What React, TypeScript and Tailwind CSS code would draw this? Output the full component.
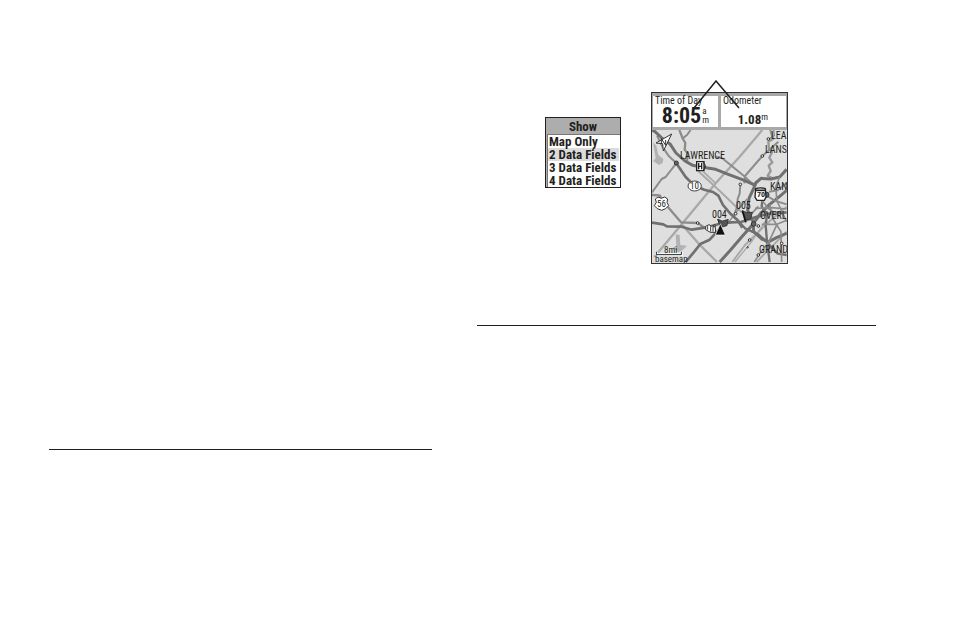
const MENU_ITEMS = ["Map Only", "2 Data Fields", "3 Data Fields", "4 Data Fields"];

type Road = { d: string; w: number; c: string };

const LIGHT = "#a9a9a9";
const MID = "#8c8c8c";
const DARK = "#707070";

const ROADS: Road[] = [
  // county lines
  { d: "M352 165 L284 245 L212 325 L110 448 L28 546", w: 7, c: LIGHT },
  { d: "M153 282 L218 342 L262 384 L290 412", w: 6, c: LIGHT },
  { d: "M212 325 L175 290", w: 5, c: LIGHT },
  { d: "M110 448 L160 505 L216 561", w: 7, c: LIGHT },
  { d: "M425 395 L372 440 L300 510 L262 561", w: 6, c: LIGHT },
  { d: "M425 470 L360 535 L335 561", w: 6, c: LIGHT },
  { d: "M360 440 L320 500 L270 561", w: 4, c: LIGHT },
  // rivers
  { d: "M376 165 L384 192 L370 200 L372 222 L381 232 L373 248 L382 262 L371 272 L377 288 L368 302 L386 312", w: 7, c: "#999" },
  { d: "M386 165 L388 182 L374 190", w: 4, c: MID },
  // minor roads
  { d: "M103 165 L113 190 L121 204 L119 224 L128 236 L126 262", w: 7, c: MID },
  { d: "M137 165 L126 180 L113 190", w: 6, c: MID },
  { d: "M36 182 L52 215 L72 244 L93 263", w: 6, c: MID },
  { d: "M93 266 L62 306 L50 312 L21 352", w: 6, c: MID },
  { d: "M212 245 L232 250 L298 304 L332 336", w: 6, c: MID },
  { d: "M400 200 L352 243 L300 303 L298 325", w: 6, c: MID },
  { d: "M286 328 L284 356 L278 372 L276 396 L266 424", w: 6, c: MID },
  { d: "M21 360 L44 361 L54 380 L72 400 L108 442 L158 444 L178 458", w: 7, c: MID },
  { d: "M306 372 L270 416 L248 446", w: 4, c: MID },
  // highways
  { d: "M21 165 L30 170 L54 192 L76 208 L93 234 L120 258 L143 271 L168 276 L212 283 L250 298 L292 314 L334 332", w: 9, c: DARK },
  { d: "M95 266 L122 306 L148 332 L178 344 L204 351 L220 362 L234 390 L258 418 L278 436 L292 458", w: 8, c: DARK },
  { d: "M21 443 L55 448 L66 454 L110 455 L140 464 L180 458 L222 447 L258 442 L288 441 L340 424 L372 416 L425 412", w: 8, c: DARK },
  { d: "M122 561 L148 530 L166 507 L194 494 L222 464", w: 8, c: DARK },
  { d: "M224 561 L256 526 L290 486 L320 452 L348 414 L374 388 L404 364 L425 346", w: 9, c: DARK },
  { d: "M425 283 L404 306 L378 312 L348 310 L332 324 L326 340 L312 370 L308 406 L324 440 L326 470 L350 492 L372 500 L396 487 L425 475", w: 9, c: DARK },
  { d: "M354 360 L350 394 L366 420 L362 450 L366 500 L374 561", w: 7, c: DARK },
  { d: "M278 436 L300 460 L340 478 L364 500 L398 536 L425 540", w: 7, c: DARK },
  // city streets
  { d: "M364 362 L392 378 L425 388", w: 6, c: MID },
  { d: "M372 350 L398 346 L425 324", w: 6, c: MID },
  { d: "M404 306 L392 336 L396 378 L425 440", w: 5, c: MID },
  { d: "M374 388 L384 432 L408 470 L410 561", w: 5, c: MID },
  { d: "M330 400 L380 398 L425 402", w: 5, c: MID },
  { d: "M350 448 L396 448 L425 436", w: 5, c: MID },
  { d: "M336 358 L372 402 L404 424", w: 5, c: MID },
  { d: "M396 448 L372 500 L344 536 L328 561", w: 5, c: MID },
  { d: "M340 394 L312 424 L300 444", w: 5, c: MID },
];

// x, y, radius
const TOWNS = [
  [94, 264, 6],
  [352, 243, 4],
  [370, 192, 4],
  [286, 328, 4],
  [158, 444, 4],
  [272, 416, 4],
  [314, 495, 4],
  [326, 447, 7],
  [340, 453, 4],
  [308, 517, 2],
  [340, 540, 4],
  [364, 359, 8],
  [410, 505, 4],
];

const LABELS = [
  { text: "LAWRENCE", at: "left-[28px] top-[20px]" },
  { text: "LEA", at: "left-[119px] top-0" },
  { text: "LANS", at: "left-[113px] top-[14px]" },
  { text: "KAN", at: "left-[118px] top-[51px]" },
  { text: "OVERL", at: "left-[108px] top-[80px]" },
  { text: "GRAND", at: "left-[107px] top-[114px]" },
  { text: "004", at: "left-[60px] top-[79px]" },
  { text: "005", at: "left-[84px] top-[70px]" },
];

export default function App() {
  return (
    <main className="grid min-h-screen grid-cols-[383fr_399fr] gap-x-[45px] bg-white pr-[78px] pl-[49px] font-['Liberation_Sans_Narrow','Roboto_Condensed','Liberation_Sans',sans-serif] text-[#231f20]">
      <section className="pt-[449px]">
        <hr className="border-t border-[#231f20]" />
      </section>

      <section className="pt-[92px]">
        <div className="flex items-start gap-[30px] pl-[68px]">
          <ShowMenu />
          <MapScreen />
        </div>
        <hr className="mt-[61px] border-t border-[#231f20]" />
      </section>
    </main>
  );
}

function ShowMenu() {
  return (
    <div className="mt-[25px] w-[76px] border border-[#231f20] bg-[#adadad]">
      <h2 className="h-4 text-center text-[13px] leading-[18px] font-bold">Show</h2>
      <div className="ml-px border-t border-l border-[#777] bg-white pr-px">
        {MENU_ITEMS.map((item, i) => (
          <button
            key={item}
            className={`block h-[13px] w-full pl-px text-left text-[13px] leading-[13px] font-bold whitespace-nowrap ${
              i === 1 ? "bg-[#dcdcdc]" : ""
            }`}
          >
            {item}
          </button>
        ))}
      </div>
    </div>
  );
}

function MapScreen() {
  return (
    <div className="relative w-[137px] border border-[#333] bg-[#a8a8a8]">
      <div className="flex h-[37px] gap-[3px] pt-[3px] pr-px pb-[3px] pl-px">
        <div className="w-[65px] bg-white pl-[2px]">
          <p className="text-[10px] leading-[10px] whitespace-nowrap">Time of Day</p>
          <div className="flex items-center justify-end gap-px pr-[9px]">
            <span className="text-[22px] leading-[20px] font-bold">8:05</span>
            <span className="flex flex-col text-[9px] leading-[9px]">
              <span>a</span>
              <span>m</span>
            </span>
          </div>
        </div>
        <div className="flex-1 bg-white pl-[2px]">
          <p className="text-[10px] leading-[10px] whitespace-nowrap">Odometer</p>
          <div className="flex items-start justify-end pt-[7px] pr-[18px]">
            <span className="text-[13px] leading-[14px] font-bold">1.08</span>
            <span className="text-[9px] leading-[9px]">m</span>
          </div>
        </div>
      </div>
      <TrailMap />
      <svg className="absolute top-[-13px] left-[41px]" width="48" height="29" viewBox="0 0 48 29" fill="none">
        <path d="M1 28 L23 1 L46 28" stroke="#231f20" strokeWidth="1.5" />
      </svg>
    </div>
  );
}

function TrailMap() {
  return (
    <div className="relative h-[133px] overflow-hidden bg-[#dfdfdf]">
      <svg className="block h-full w-full" viewBox="21 165 405 399" fill="none">
        {/* lakes */}
        <path d="M24 202 L34 212 L40 240 L55 252 L53 264 L42 270 L24 258 L32 250Z" fill="#b2b2b2" />
        <path d="M92 478 L104 480 L106 510 L126 512 L114 524 L100 532 L84 518 L94 512Z" fill="#b2b2b2" />
        {ROADS.map((r) => (
          <path key={r.d} d={r.d} stroke={r.c} strokeWidth={r.w} strokeLinejoin="round" />
        ))}
        {TOWNS.map(([x, y, r]) => (
          <circle key={`${x}-${y}`} cx={x} cy={y} r={r} fill={r > 5 ? "#666" : "#eee"} stroke="#333" strokeWidth="3" />
        ))}

        {/* north arrow */}
        <path d="M80 177 L55 228 L53 206 L33 204Z" fill="#fff" stroke="#333" strokeWidth="3" />
        <path d="M49 207 V191 L62 211 V195" stroke="#333" strokeWidth="3" />

        {/* highway shields */}
        <path d="M155 260 H177 V287 H155Z" fill="#fff" stroke="#222" strokeWidth="4" />
        <path d="M161 264 V283 M170 264 V283 M161 274 H170" stroke="#222" strokeWidth="4" />
        <path d="M174 262 Q188 273 174 286" stroke="#222" strokeWidth="3" />
        <ellipse cx="149" cy="333" rx="20" ry="15" fill="#fff" stroke="#444" strokeWidth="3" />
        <path d="M31 372 L39 366 L49 370 L59 366 L68 372 L66 382 L71 392 L62 401 L50 406 L37 401 L28 392 L34 382Z" fill="#fff" stroke="#333" strokeWidth="3" />
        <path d="M332 341 Q346 336 361 341 L363 366 L358 376 H336 L330 366Z" fill="#fff" stroke="#222" strokeWidth="4" />
        <path d="M333 346 H361" stroke="#222" strokeWidth="5" />
        <path d="M182 454 L192 449 L200 454 L210 449 L212 472 H196 L182 464Z" fill="#fff" stroke="#333" strokeWidth="3" />
        <path d="M188 454 V464 M197 454 V470 M204 454 V470 M204 455 H210" stroke="#333" strokeWidth="3" />

        {/* waypoint flags and position marker */}
        <path d="M292 407 L304 412 L322 412 L317 432 L303 434 L302 440Z" fill="#555" stroke="#222" strokeWidth="2" />
        <path d="M292 407 L302 440" stroke="#111" strokeWidth="5" />
        <path d="M220 433 L232 438 L250 433 L246 452 L232 456Z" fill="#555" stroke="#222" strokeWidth="2" />
        <path d="M218 432 L226 456" stroke="#111" strokeWidth="3" />
        <path d="M226 446 L241 480 H211Z" fill="#111" stroke="#fff" strokeWidth="2" />

        {/* scale bar */}
        <path d="M34 530 V539 H109 V530" stroke="#fff" strokeWidth="8" />
        <path d="M34 530 V539 H109 V530" stroke="#222" strokeWidth="3" />
      </svg>

      {LABELS.map((l) => (
        <span key={l.text} className={`absolute text-[10px] leading-[12px] ${l.at}`}>
          {l.text}
        </span>
      ))}
      <span className="absolute top-[51px] left-[38px] text-[9px] leading-[10px]">10</span>
      <span className="absolute top-[69px] left-[5px] text-[9px] leading-[10px]">56</span>
      <span className="absolute top-[61px] left-[105px] text-[8px] leading-[8px] font-bold">70</span>
      <span className="absolute top-[115px] left-[12px] text-[9px] leading-[10px]">8mi</span>
      <span className="absolute top-[125px] left-[3px] text-[9px] leading-[8px]">basemap</span>
    </div>
  );
}
